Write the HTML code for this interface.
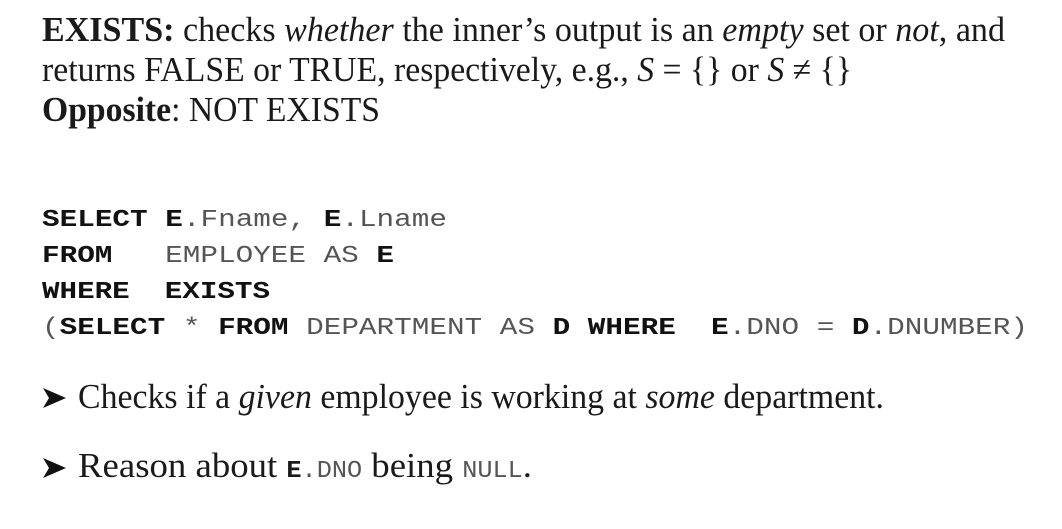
<!DOCTYPE html>
<html><head><meta charset="utf-8"><style>
html,body{margin:0;padding:0;background:#fff;width:1062px;height:529px;overflow:hidden}
svg{display:block}
.s{font-family:"Liberation Serif",serif;font-size:35px;fill:#1a1a1a}
.m{font-family:"Liberation Mono",monospace;font-size:24px;fill:#555;white-space:pre}
.b{font-weight:bold;fill:#111}
</style></head><body>
<svg width="1062" height="529" xmlns="http://www.w3.org/2000/svg" xml:space="preserve">
<text class="s" x="42" y="41" textLength="963" lengthAdjust="spacingAndGlyphs"><tspan font-weight="bold">EXISTS:</tspan> checks <tspan font-style="italic">whether</tspan> the inner’s output is an <tspan font-style="italic">empty</tspan> set or <tspan font-style="italic">not</tspan>, and</text>
<text class="s" x="42" y="81" textLength="810" lengthAdjust="spacingAndGlyphs">returns FALSE or TRUE, respectively, e.g., <tspan font-style="italic">S</tspan> = {} or <tspan font-style="italic">S</tspan>  ≠ {}</text>
<text class="s" x="42" y="121" textLength="338" lengthAdjust="spacingAndGlyphs"><tspan font-weight="bold">Opposite</tspan>: NOT EXISTS</text>

<text class="m" x="42" y="226" textLength="405" lengthAdjust="spacingAndGlyphs"><tspan class="b">SELECT</tspan> <tspan class="b">E</tspan>.Fname, <tspan class="b">E</tspan>.Lname</text>
<text class="m" x="42" y="262" textLength="352" lengthAdjust="spacingAndGlyphs"><tspan class="b">FROM</tspan>   EMPLOYEE AS <tspan class="b">E</tspan></text>
<text class="m" x="42" y="298" textLength="228" lengthAdjust="spacingAndGlyphs"><tspan class="b">WHERE</tspan>  <tspan class="b">EXISTS</tspan></text>
<text class="m" x="42" y="334" textLength="986" lengthAdjust="spacingAndGlyphs">(<tspan class="b">SELECT</tspan> * <tspan class="b">FROM</tspan> DEPARTMENT AS <tspan class="b">D</tspan> <tspan class="b">WHERE</tspan>  <tspan class="b">E</tspan>.DNO = <tspan class="b">D</tspan>.DNUMBER)</text>

<path d="M43 388 L66 398 L43 408 L49 398 Z" fill="#111"/>
<text class="s" x="78" y="408" textLength="806" lengthAdjust="spacingAndGlyphs">Checks if a <tspan font-style="italic">given</tspan> employee is working at <tspan font-style="italic">some</tspan> department.</text>
<path d="M43 458 L66 468 L43 478 L49 468 Z" fill="#111"/>
<text class="s" x="78" y="477" textLength="454" lengthAdjust="spacingAndGlyphs">Reason about <tspan font-family="Liberation Mono,monospace" font-size="24" font-weight="bold">E</tspan><tspan font-family="Liberation Mono,monospace" font-size="24" fill="#555">.DNO</tspan>  being <tspan font-family="Liberation Mono,monospace" font-size="24" fill="#555">NULL</tspan>.</text>
</svg>
</body></html>
